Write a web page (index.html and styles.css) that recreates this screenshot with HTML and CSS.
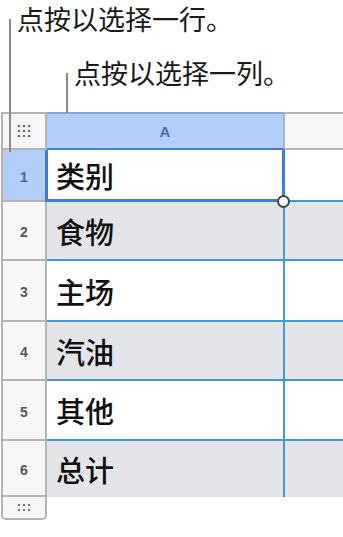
FILE: index.html
```html
<!DOCTYPE html>
<html lang="zh-CN">
<head>
    <meta charset="UTF-8">
    <meta name="viewport" content="width=device-width, initial-scale=1.0">
    <title>选择行和列</title>
    <link rel="stylesheet" href="styles.css">
</head>
<body>
    <div class="page">
        <div class="callout callout-row">点按以选择一行。</div>
        <div class="callout callout-col">点按以选择一列。</div>

        <div class="sheet">
            <div class="corner">
                <svg width="12" height="12" viewBox="0 0 12 12">
                    <g fill="#666">
                        <rect x="0" y="0" width="2" height="2"/><rect x="5" y="0" width="2" height="2"/><rect x="10" y="0" width="2" height="2"/>
                        <rect x="0" y="5" width="2" height="2"/><rect x="5" y="5" width="2" height="2"/><rect x="10" y="5" width="2" height="2"/>
                        <rect x="0" y="10" width="2" height="2"/><rect x="5" y="10" width="2" height="2"/><rect x="10" y="10" width="2" height="2"/>
                    </g>
                </svg>
            </div>
            <div class="col-head col-a">A</div>
            <div class="col-head col-b"></div>

            <div class="row-head active">1</div>
            <div class="cell selected">类别<span class="handle"></span></div>
            <div class="cell extra"></div>

            <div class="row-head">2</div>
            <div class="cell shaded">食物</div>
            <div class="cell extra shaded"></div>

            <div class="row-head">3</div>
            <div class="cell">主场</div>
            <div class="cell extra"></div>

            <div class="row-head">4</div>
            <div class="cell shaded">汽油</div>
            <div class="cell extra shaded"></div>

            <div class="row-head">5</div>
            <div class="cell">其他</div>
            <div class="cell extra"></div>

            <div class="row-head last">6</div>
            <div class="cell shaded last">总计</div>
            <div class="cell extra shaded last"></div>

            <div class="row-foot">
                <svg width="12" height="7" viewBox="0 0 12 7">
                    <g fill="#777">
                        <rect x="0" y="0" width="2" height="2"/><rect x="5" y="0" width="2" height="2"/><rect x="10" y="0" width="2" height="2"/>
                        <rect x="0" y="5" width="2" height="2"/><rect x="5" y="5" width="2" height="2"/><rect x="10" y="5" width="2" height="2"/>
                    </g>
                </svg>
            </div>
        </div>
    </div>
</body>
</html>
```

FILE: styles.css
```css
body {
    margin: 0;
    background: #fff;
    font-family: "Noto Sans CJK SC", "Noto Sans", sans-serif;
    color: #111;
}

.page {
    position: relative;
    width: 343px;
    height: 537px;
}

.callout {
    font-size: 27px;
    line-height: 38px;
    color: #1a1a1a;
    white-space: nowrap;
}

.callout-row {
    padding: 0 0 0 17px;
    height: 40px;
}

.callout-col {
    padding: 14px 0 0 74px;
    height: 56px;
    box-sizing: border-box;
}

/* leader lines from the labels down to the headers */
.callout-row::before,
.callout-col::before {
    content: "";
    position: absolute;
    width: 2px;
    background: #8a8a8a;
    z-index: 3;
}

.callout-row::before {
    left: 9px;
    top: 19px;
    height: 133px;
}

.callout-col::before {
    left: 66px;
    top: 73px;
    height: 40px;
}

.sheet {
    display: grid;
    grid-template-columns: 46px 238px 60px;
    grid-template-rows: 38px 52px 59px 61px 59px 60px 56px 23px;
    margin: 16px 0 0 1px;
}

.corner,
.col-head,
.row-head,
.row-foot {
    box-sizing: border-box;
    background: #f7f7f7;
    display: flex;
    align-items: center;
    justify-content: center;
}

.corner {
    border: 2px solid #b4b4b4;
}

.col-head {
    border-top: 2px solid #b4b4b4;
    border-bottom: 2px solid #b4b4b4;
    font-family: "Liberation Sans", Arial, sans-serif;
    font-weight: bold;
    font-size: 15px;
    color: #4c6ca8;
}

.col-a {
    background: #b3cefa;
    border-top-color: #86a7dc;
    border-bottom-color: #3f7fd6;
    border-right: 2px solid #b4b4b4;
}

.col-b {
    background: #f7f7f7;
}

.row-head {
    border-left: 2px solid #b4b4b4;
    border-right: 2px solid #b4b4b4;
    border-bottom: 2px solid #b4b4b4;
    font-family: "Liberation Sans", Arial, sans-serif;
    font-weight: bold;
    font-size: 14px;
    color: #555;
    padding-top: 3px;
}

.row-head.active {
    background: #b3cefa;
    color: #3f68ad;
}

.row-foot {
    border: 2px solid #b4b4b4;
    border-top: none;
    border-radius: 0 0 5px 5px;
}

.cell {
    box-sizing: border-box;
    display: flex;
    align-items: center;
    padding-left: 9px;
    font-size: 29px;
    font-weight: 500;
    color: #111;
    border-bottom: 2px solid #3e9bd3;
    border-right: 2px solid #3e9bd3;
}

.cell.extra {
    border-right: none;
}

.cell.shaded {
    background: #e3e4e8;
}

.cell.last {
    border-bottom: none;
}

.cell.selected {
    position: relative;
    background: #fff;
    border: 3px solid #3b7ed9;
    border-top: none;
    margin-left: -2px;
    padding-left: 8px;
}

.handle {
    position: absolute;
    right: -8px;
    bottom: -9px;
    width: 9px;
    height: 9px;
    border: 2px solid #444;
    border-radius: 50%;
    background: #fff;
    z-index: 2;
}
```
